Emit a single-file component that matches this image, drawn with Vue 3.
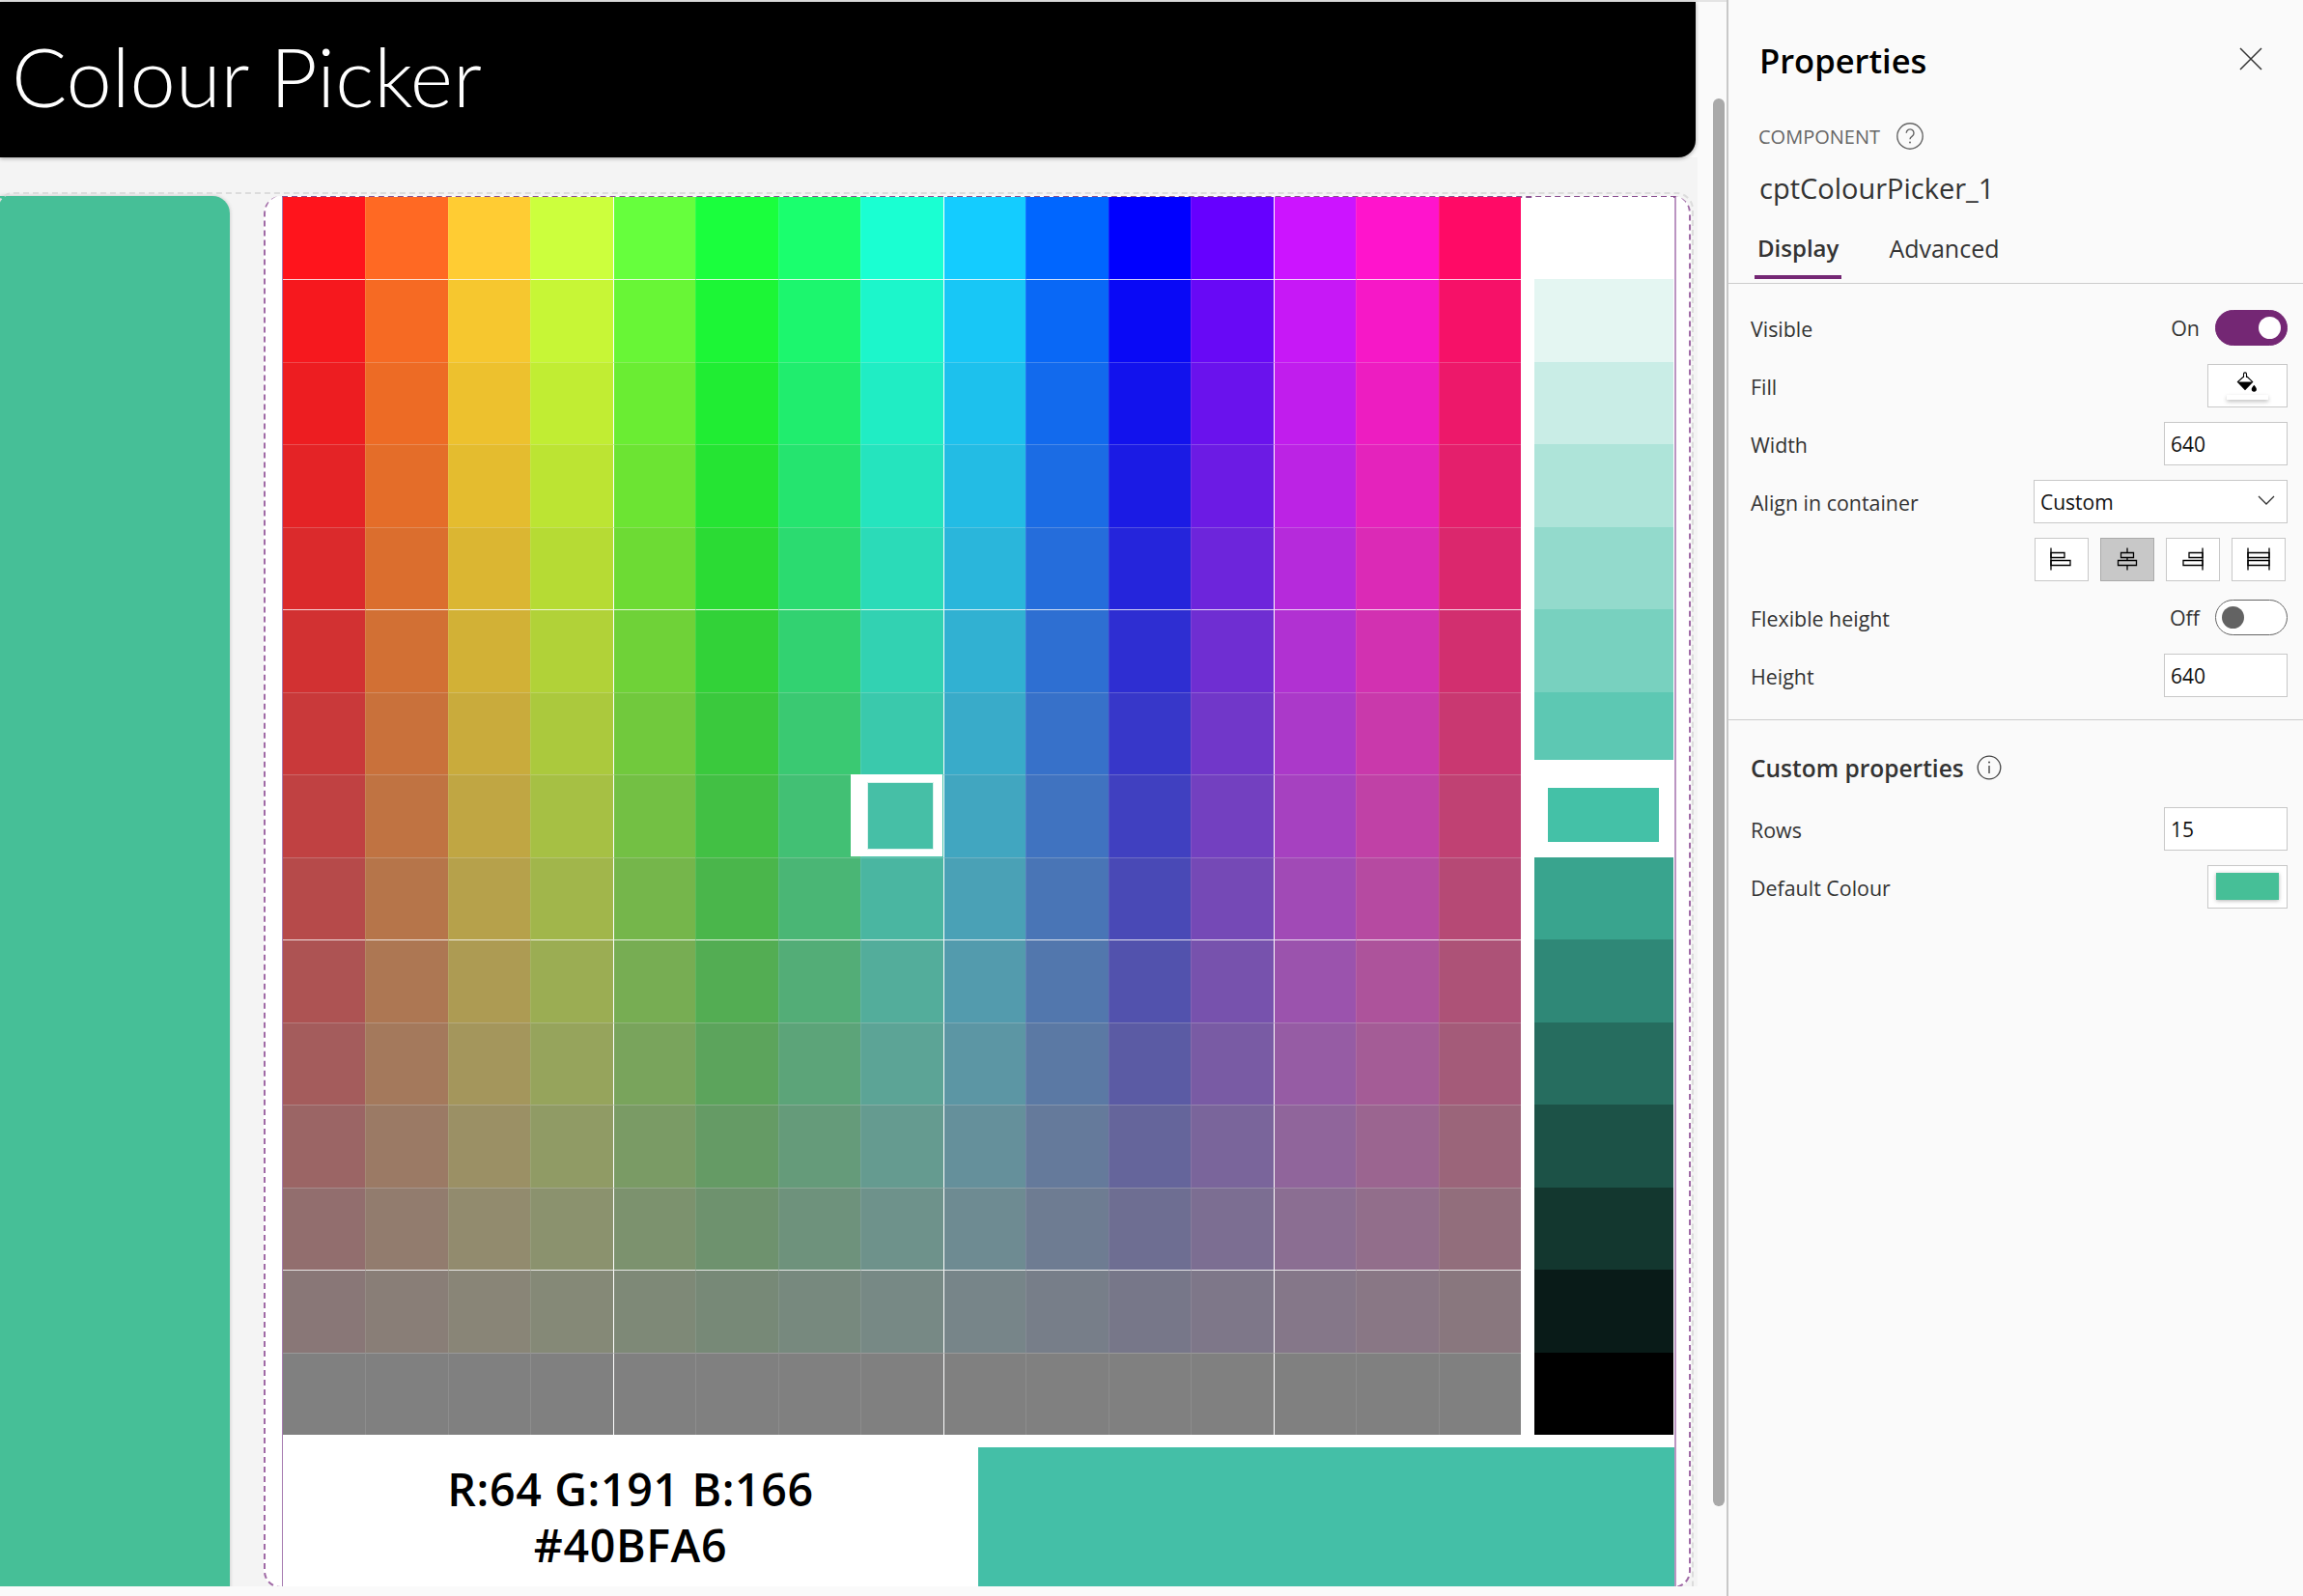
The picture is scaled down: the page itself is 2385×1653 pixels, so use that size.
<template>
  <div class="page">
    <div class="stage">
      <header class="banner">
        <h1 class="banner-title">Colour Picker</h1>
      </header>
      <div class="canvas">
        <div class="side-card"></div>
        <div class="picker">
          <div class="board">
            <div class="palette">
              <div class="hues">
                <template v-for="(row, r) in hueRows" :key="r">
                  <div
                    v-for="(colour, c) in row"
                    :key="c"
                    class="cell"
                    :class="{ 'row-line': r % 4 === 1, 'col-line': c > 0 && c % 4 === 0, 'no-top': r === 0, 'no-left': c === 0 }"
                    :style="{ background: colour }"
                  ></div>
                </template>
              </div>
              <div class="shades">
                <div v-for="(colour, s) in shades" :key="s" class="shade" :style="{ background: colour }"></div>
              </div>
              <div class="hue-marker"><div class="hue-marker-fill"></div></div>
              <div class="shade-marker"><div class="shade-marker-fill"></div></div>
            </div>
            <div class="readout">
              <div class="readout-text">
                <div>R:64 G:191 B:166</div>
                <div>#40BFA6</div>
              </div>
              <div class="readout-swatch"></div>
            </div>
          </div>
        </div>
        <div class="canvas-outline"></div>
      </div>
      <div class="scrollbar"></div>
    </div>

    <aside class="panel">
      <div class="panel-head">
        <h2 class="panel-title">Properties</h2>
        <svg class="close" width="24" height="24" viewBox="0 0 24 24">
          <path d="M1 1l22 22M23 1L1 23" stroke="#333" stroke-width="1.5" fill="none" />
        </svg>
      </div>
      <div class="kind">
        <span>COMPONENT</span>
        <svg width="30" height="30" viewBox="0 0 30 30">
          <circle cx="15" cy="15" r="13.2" stroke="#666" stroke-width="1.4" fill="none" />
          <path d="M11.2 11.8a3.9 3.9 0 1 1 6 3.3c-1.4.9-2.2 1.6-2.2 3.2" stroke="#666" stroke-width="1.4" fill="none" />
          <circle cx="15" cy="21.6" r="1" fill="#666" />
        </svg>
      </div>
      <div class="comp-name">cptColourPicker_1</div>
      <div class="tabs">
        <span class="tab active">Display</span>
        <span class="tab">Advanced</span>
      </div>

      <section class="rows first">
        <div class="row">
          <span>Visible</span>
          <div class="toggle-wrap">
            <span class="toggle-text">On</span>
            <span class="toggle on"><i></i></span>
          </div>
        </div>
        <div class="row">
          <span>Fill</span>
          <div class="colour-btn">
            <svg width="24" height="24" viewBox="0 0 24 24">
              <path d="M8.5 7V3.4a1.5 1.5 0 0 1 3 0V7" stroke="#000" stroke-width="1.1" fill="none" />
              <path d="M8 6.5l-5.6 5L10 19.4l7.7-8L12 6" stroke="#000" stroke-width="1.1" fill="none" />
              <path d="M2.4 11.4h15.3L10 19.4z" fill="#000" />
              <path d="M19.3 14.8c1.6 2 2.6 3.1 2.6 4.3a2.6 2.6 0 0 1-5.2 0c0-1.2 1-2.3 2.6-4.3z" fill="#000" />
            </svg>
            <span class="fill-bar"></span>
          </div>
        </div>
        <div class="row">
          <span>Width</span>
          <div class="input">640</div>
        </div>
        <div class="row">
          <span>Align in container</span>
          <div class="select">
            <span>Custom</span>
            <svg width="18" height="10" viewBox="0 0 18 10">
              <path d="M1 1l8 8 8-8" stroke="#333" stroke-width="1.3" fill="none" />
            </svg>
          </div>
        </div>
        <div class="row align-row">
          <div class="align-btn">
            <svg width="24" height="24" viewBox="0 0 24 24">
              <path d="M1 .5v23" stroke="#000" stroke-width="1.3" />
              <path d="M1 5.5h14v5H1zM1 13.5h20v5H1z" stroke="#000" stroke-width="1.3" fill="none" />
            </svg>
          </div>
          <div class="align-btn selected">
            <svg width="24" height="24" viewBox="0 0 24 24">
              <path d="M12 .5v5M12 10.500v3M12 18.500v5" stroke="#000" stroke-width="1.3" />
              <path d="M5.500 5.500h13v5h-13zM2.500 13.500h19v5h-19z" stroke="#000" stroke-width="1.3" fill="none" />
            </svg>
          </div>
          <div class="align-btn">
            <svg width="24" height="24" viewBox="0 0 24 24">
              <path d="M22 .5v23" stroke="#000" stroke-width="1.3" />
              <path d="M22 5.500H8v5h14zM22 13.500H2v5h20z" stroke="#000" stroke-width="1.3" fill="none" />
            </svg>
          </div>
          <div class="align-btn">
            <svg width="24" height="24" viewBox="0 0 24 24">
              <path d="M1 .5v23M23 .5v23" stroke="#000" stroke-width="1.3" />
              <path d="M1 5.500h22v5H1zM1 13.500h22v5H1z" stroke="#000" stroke-width="1.3" fill="none" />
            </svg>
          </div>
        </div>
        <div class="row">
          <span>Flexible height</span>
          <div class="toggle-wrap">
            <span class="toggle-text">Off</span>
            <span class="toggle"><i></i></span>
          </div>
        </div>
        <div class="row">
          <span>Height</span>
          <div class="input">640</div>
        </div>
      </section>

      <section class="custom">
        <div class="custom-title">
          <span>Custom properties</span>
          <svg width="26" height="26" viewBox="0 0 26 26">
            <circle cx="13" cy="13" r="11.800" stroke="#444" stroke-width="1.3" fill="none" />
            <path d="M13 11v8" stroke="#444" stroke-width="1.4" />
            <circle cx="13" cy="7.500" r="1" fill="#444" />
          </svg>
        </div>
        <div class="row">
          <span>Rows</span>
          <div class="input">15</div>
        </div>
        <div class="row">
          <span>Default Colour</span>
          <div class="colour-btn"><span class="default-swatch"></span></div>
        </div>
      </section>
    </aside>
  </div>
</template>

<script setup>
import { computed } from 'vue'

// full colour of each column, and how far the screenshot's top row sits off it
const pure = [
  [255, 0, 0], [255, 102, 0], [255, 204, 0], [204, 255, 0], [102, 255, 0],
  [0, 255, 0], [0, 255, 102], [0, 255, 204], [0, 204, 255], [0, 102, 255],
  [0, 0, 255], [102, 0, 255], [204, 0, 255], [255, 0, 204], [255, 0, 102]
]
const lift = [
  [0, 20, 28], [0, 3, 35], [0, 0, 51], [0, 0, 61], [0, 0, 61],
  [26, 0, 61], [26, 0, 8], [26, 0, 6], [20, 0, 0], [0, 0, 0],
  [0, 0, 0], [0, 0, 0], [0, 20, 0], [0, 20, 0], [0, 10, 0]
]

const ROWS = 15

const hueRows = computed(() => {
  const rows = []
  for (let r = 0; r < ROWS; r++) {
    const t = r / (ROWS - 1)
    rows.push(pure.map((c, i) => {
      const rgb = c.map((v, k) => Math.round(v + (128 - v) * t + lift[i][k] * Math.pow(1 - t, 4)))
      return `rgb(${rgb.join(',')})`
    }))
  }
  return rows
})

const picked = [66, 191, 166]

const shades = computed(() => {
  const list = []
  for (let s = 0; s < ROWS; s++) {
    const rgb = s <= 7
      ? picked.map(v => Math.round(255 + (v - 255) * s / 7))
      : picked.map(v => Math.round(v * (14 - s) / 7))
    list.push(`rgb(${rgb.join(',')})`)
  }
  return list
})
</script>

<style>
html, body {
  margin: 0;
  background: #fafafa;
}
</style>

<style scoped>
.page {
  display: flex;
  width: 2385px;
  height: 1653px;
  overflow: hidden;
  background: #fafafa;
  font-family: "Open Sans", "Noto Sans", sans-serif;
  color: #333;
  box-shadow: inset 0 2px 0 #e4e4e4;
}

.stage {
  position: relative;
  width: 1788px;
  flex-shrink: 0;
  padding-right: 30px;
  box-sizing: border-box;
}

.banner {
  height: 161px;
  margin-top: 2px;
  background: #000;
  border-radius: 0 0 18px 0;
  margin-right: 2px;
  box-shadow: 0 1px 4px rgba(0, 0, 0, 0.35);
  position: relative;
  z-index: 1;
  display: flex;
  align-items: center;
}

.banner-title {
  margin: -9px 0 0 12px;
  font-family: Lato, sans-serif;
  font-weight: 300;
  font-size: 84.800px;
  line-height: 1;
  color: #fff;
}

.canvas {
  position: relative;
  display: flex;
  height: 1480px;
  padding-top: 40px;
  box-sizing: border-box;
  background: #f4f4f4;
  overflow: hidden;
}

.side-card {
  width: 238px;
  height: 1460px;
  flex-shrink: 0;
  background: #46bf97;
  border-radius: 0 18px 18px 0;
  box-shadow: 0 0 4px rgba(0, 0, 0, 0.2);
}

.picker {
  width: 1478px;
  height: 1442px;
  margin-left: 35px;
  padding-left: 17px;
  box-sizing: border-box;
  background: #fff;
  border: 2px dashed #a06aa6;
  border-top: 0;
  border-radius: 18px;
  position: relative;
}

.board {
  width: 1444px;
  height: 100%;
  box-sizing: border-box;
  border-left: 1.5px solid #a67bb0;
  border-right: 2px solid #bb95c2;
  border-top: 2px dashed #8a4f90;
  display: flex;
  flex-direction: column;
}

.palette {
  position: relative;
  display: flex;
  gap: 14px;
  height: 1282px;
  margin-top: -1px;
  flex-shrink: 0;
}

.hues {
  width: 1282px;
  flex-shrink: 0;
  display: grid;
  grid-template-columns: repeat(15, 1fr);
  grid-template-rows: repeat(15, 1fr);
}

.cell {
  box-sizing: border-box;
  border-top: 1px solid rgba(255, 255, 255, 0.2);
  border-left: 1px solid rgba(255, 255, 255, 0.1);
}

.cell.no-top {
  border-top: 0;
}

.cell.no-left {
  border-left: 0;
}

.cell.row-line {
  border-top: 1px solid rgba(255, 255, 255, 0.8);
}

.cell.col-line {
  border-left: 1px solid #fff;
}

.shades {
  width: 144px;
  flex-shrink: 0;
  display: grid;
  grid-template-rows: repeat(15, 1fr);
}

.hue-marker {
  position: absolute;
  left: 588px;
  top: 598px;
  width: 95px;
  height: 85px;
  box-sizing: border-box;
  padding: 9px 10px 8px 18px;
  background: #fff;
}

.hue-marker-fill {
  height: 100%;
  background: #46bfa6;
  box-shadow: 0 0 0 1px rgba(70, 191, 166, 0.2);
}

.shade-marker {
  position: absolute;
  left: 1282px;
  top: 583px;
  width: 158px;
  height: 101px;
  box-sizing: border-box;
  padding: 29px 15px 16px 28px;
  background: #fff;
}

.shade-marker-fill {
  height: 100%;
  background: #44c1a7;
}

.readout {
  display: flex;
  flex: 1;
}

.readout-text {
  width: 720px;
  flex-shrink: 0;
  padding-top: 27px;
  text-align: center;
  font-weight: 600;
  font-size: 46.500px;
  line-height: 58px;
  color: #000;
  letter-spacing: 0.65px;
}

.readout-swatch {
  flex: 1;
  margin-top: 13px;
  background: #44bfa7;
}

.canvas-outline {
  position: absolute;
  left: -4px;
  top: 36px;
  width: 1758px;
  height: 1480px;
  box-sizing: border-box;
  border: 2px dashed #dcdcdc;
  border-radius: 18px;
  pointer-events: none;
}

.scrollbar {
  position: absolute;
  left: 1774px;
  top: 102px;
  width: 12px;
  height: 1458px;
  border-radius: 6px;
  background: #a9a9a9;
}

.panel {
  flex: 1;
  border-left: 2px solid #c8c8c8;
  background: #fafafa;
  box-sizing: border-box;
}

.panel-head {
  display: flex;
  justify-content: space-between;
  align-items: center;
  height: 124px;
  padding: 0 42px 0 32px;
  box-sizing: border-box;
}

.panel-title {
  margin: 0;
  font-size: 34.500px;
  font-weight: 600;
  color: #000;
}

.close {
  transform: translateY(-1px);
}

.kind {
  display: flex;
  align-items: center;
  gap: 16px;
  height: 34px;
  padding-left: 31px;
  font-size: 20px;
  color: #666;
}

.comp-name {
  margin-top: 17px;
  margin-bottom: 1px;
  padding-left: 32px;
  font-size: 29px;
  line-height: 40px;
  color: #333;
}

.tabs {
  display: flex;
  gap: 46px;
  height: 78px;
  padding: 23px 0 0 27px;
  box-sizing: border-box;
  border-bottom: 1px solid #ccc;
}

.tab {
  font-size: 25px;
  line-height: 36px;
  color: #333;
  height: 46px;
  padding: 0 3px;
}

.tab.active {
  font-size: 24px;
  font-weight: 600;
  border-bottom: 4px solid #742774;
}

.rows.first {
  padding: 15px 0 16px;
  border-bottom: 1px solid #ccc;
}

.row {
  display: flex;
  justify-content: space-between;
  align-items: center;
  height: 60px;
  padding: 0 16px 0 23px;
  font-size: 21.400px;
  color: #333;
}

.row > span:first-child {
  padding-top: 3px;
}

.align-row {
  justify-content: flex-end;
  gap: 11.500px;
  padding-right: 18px;
}

.toggle-wrap {
  display: flex;
  align-items: center;
  gap: 16px;
}

.toggle {
  display: flex;
  align-items: center;
  width: 75px;
  height: 37px;
  box-sizing: border-box;
  padding: 0 6px;
  border: 1px solid #666;
  border-radius: 19px;
  background: #fff;
}

.toggle i {
  width: 23px;
  height: 23px;
  border-radius: 50%;
  background: #636363;
}

.toggle.on {
  justify-content: flex-end;
  background: #742774;
  border-color: #742774;
}

.toggle.on i {
  background: #fff;
}

.colour-btn {
  position: relative;
  display: flex;
  justify-content: center;
  align-items: center;
  width: 83px;
  height: 45px;
  box-sizing: border-box;
  border: 1px solid #c8c8c8;
  background: #fff;
}

.colour-btn svg {
  margin-top: -7px;
  margin-left: -2px;
}

.fill-bar {
  position: absolute;
  left: 19px;
  bottom: 7px;
  width: 43px;
  height: 5px;
  background: #fff;
  box-shadow: 0 2px 4px rgba(0, 0, 0, 0.25);
}

.default-swatch {
  width: 65px;
  height: 28px;
  background: #46bf97;
  box-shadow: 0 1px 4px rgba(0, 0, 0, 0.3);
}

.input {
  width: 128px;
  height: 45px;
  box-sizing: border-box;
  padding-left: 6px;
  border: 1px solid #c8c8c8;
  background: #fff;
  font-size: 21px;
  line-height: 44px;
  color: #111;
}

.select {
  display: flex;
  justify-content: space-between;
  align-items: center;
  width: 263px;
  height: 45px;
  box-sizing: border-box;
  padding: 2px 12px 0 6px;
  border: 1px solid #c8c8c8;
  background: #fff;
  font-size: 21px;
  color: #111;
}

.select svg {
  margin-top: -4px;
}

.align-btn {
  display: flex;
  justify-content: center;
  align-items: center;
  width: 56.500px;
  height: 45px;
  box-sizing: border-box;
  border: 1px solid #c8c8c8;
  background: #fff;
}

.align-btn.selected {
  background: #c8c8c8;
  border-color: #aaa;
}

.custom-title {
  display: flex;
  align-items: center;
  gap: 13px;
  padding: 16px 0 0 23px;
  height: 66px;
  font-size: 24.500px;
  font-weight: 600;
  color: #333;
}
</style>
